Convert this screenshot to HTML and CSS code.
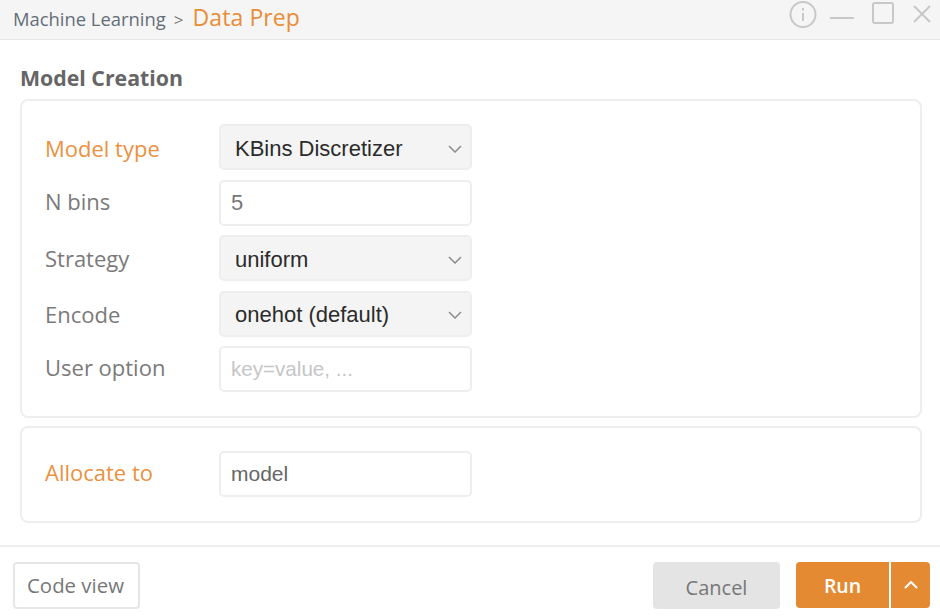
FILE: index.html
```html
<!DOCTYPE html>
<html lang="en">
<head>
    <meta charset="UTF-8">
    <title>Data Prep</title>
    <link rel="stylesheet" href="styles.css">
</head>
<body>
    <div class="window">
        <div class="titlebar">
            <div class="crumbs">
                <span class="crumb">Machine Learning</span>
                <span class="crumb-sep">&gt;</span>
                <span class="crumb-current">Data Prep</span>
            </div>
            <div class="win-icons">
                <svg width="28" height="28" viewBox="0 0 28 28" fill="none" stroke="#c8c8c8" stroke-width="2">
                    <circle cx="14" cy="13.5" r="12.5"/>
                    <path d="M14 12v8"/>
                    <path d="M14 7v2.5"/>
                </svg>
                <svg class="icon-min" width="24" height="28" viewBox="0 0 24 28" fill="none" stroke="#c8c8c8" stroke-width="2">
                    <path d="M0 17h24"/>
                </svg>
                <svg class="icon-max" width="22" height="24" viewBox="0 0 22 24" fill="none" stroke="#c8c8c8" stroke-width="2">
                    <rect x="1" y="2" width="20" height="20" rx="2"/>
                </svg>
                <svg class="icon-close" width="20" height="24" viewBox="0 0 20 24" fill="none" stroke="#c8c8c8" stroke-width="2">
                    <path d="M2 5l16 16M18 5L2 21"/>
                </svg>
            </div>
        </div>

        <div class="content">
            <h2 class="section-title">Model Creation</h2>
            <div class="card card-main">
                <div class="form-row">
                    <label class="form-label accent label-low">Model type</label>
                    <div class="field select">KBins Discretizer<svg class="chevron" width="14" height="8" viewBox="0 0 14 8"><path d="M1 1l6 6 6-6"/></svg></div>
                </div>
                <div class="form-row">
                    <label class="form-label label-high">N bins</label>
                    <div class="field input">5</div>
                </div>
                <div class="form-row">
                    <label class="form-label">Strategy</label>
                    <div class="field select">uniform<svg class="chevron" width="14" height="8" viewBox="0 0 14 8"><path d="M1 1l6 6 6-6"/></svg></div>
                </div>
                <div class="form-row">
                    <label class="form-label">Encode</label>
                    <div class="field select">onehot (default)<svg class="chevron" width="14" height="8" viewBox="0 0 14 8"><path d="M1 1l6 6 6-6"/></svg></div>
                </div>
                <div class="form-row">
                    <label class="form-label label-high">User option</label>
                    <div class="field input placeholder">key=value, ...</div>
                </div>
            </div>
            <div class="card card-alloc">
                <div class="form-row">
                    <label class="form-label accent label-high">Allocate to</label>
                    <div class="field input value">model</div>
                </div>
            </div>
        </div>

        <div class="footer">
            <button class="btn btn-code">Code view</button>
            <div class="footer-right">
                <button class="btn btn-cancel">Cancel</button>
                <div class="run-group">
                    <button class="btn btn-run">Run</button>
                    <button class="btn btn-caret">
                        <svg width="14" height="8" viewBox="0 0 14 8" fill="none" stroke="#fff" stroke-width="2"><path d="M1 7l6-6 6 6"/></svg>
                    </button>
                </div>
            </div>
        </div>
    </div>
</body>
</html>
```

FILE: styles.css
```css
* {
    box-sizing: border-box;
}

body {
    margin: 0;
    background-color: #fff;
    font-family: "Open Sans", "Noto Sans", sans-serif;
    color: #6e6e6e;
}

.window {
    width: 940px;
    height: 616px;
    display: flex;
    flex-direction: column;
    overflow: hidden;
}

.titlebar {
    height: 40px;
    padding: 0 8px 0 13px;
    display: flex;
    align-items: flex-start;
    justify-content: space-between;
    background-color: #f5f5f5;
    border-bottom: 1px solid #e6e6e6;
}

.crumbs {
    display: flex;
    align-items: baseline;
    gap: 8px;
    margin-top: 1px;
}

.crumb {
    font-size: 18.4px;
    color: #646e78;
}

.crumb-sep {
    font-size: 17px;
    color: #7a7a7a;
    margin-right: 1px;
}

.crumb-current {
    font-size: 23px;
    letter-spacing: 0.1px;
    color: #e88d38;
}

.win-icons {
    display: flex;
    align-items: flex-start;
    padding-top: 1px;
}

.icon-min {
    margin-left: 13px;
}

.icon-max {
    margin-left: 18px;
}

.icon-close {
    margin-left: 18px;
}

.content {
    flex: 1;
    padding: 0 18px 0 20px;
}

.section-title {
    margin: 24px 0 8px;
    font-size: 21.3px;
    line-height: 27px;
    font-weight: 700;
    color: #666;
}

.card {
    border: 2px solid #eee;
    border-radius: 8px;
    padding: 23px 23px 0;
}

.card-main {
    height: 319px;
    display: flex;
    flex-direction: column;
    gap: 9.5px;
}

.card-alloc {
    height: 97px;
    margin-top: 8px;
}

.form-row {
    display: flex;
    align-items: center;
}

.form-label {
    width: 174px;
    font-size: 22px;
    color: #7a7a7a;
}

.form-label.accent {
    color: #ea9142;
}

.label-high {
    margin-bottom: 4px;
}

.label-low {
    margin-top: 2px;
}

.field {
    width: 253px;
    height: 46px;
    display: flex;
    align-items: center;
    justify-content: space-between;
    border: 2px solid #eee;
    border-radius: 5px;
    font-family: "Liberation Sans", Arial, sans-serif;
    font-size: 22px;
}

.select {
    padding: 3px 8px 0 14px;
    background-color: #f4f4f4;
    color: #2b2b2b;
}

.input {
    padding: 0 10px;
    background-color: #fff;
    color: #777;
}

.input.value {
    font-size: 21px;
    color: #666;
}

.input.placeholder {
    font-size: 20.6px;
    color: #c6c6c6;
}

.chevron {
    fill: none;
    stroke: #8c8c8c;
    stroke-width: 1.5;
}

.footer {
    height: 71px;
    padding: 15px 10px 0 13px;
    display: flex;
    justify-content: space-between;
    border-top: 2px solid #eee;
}

.footer-right {
    display: flex;
    gap: 16px;
}

.btn {
    height: 47px;
    border: none;
    border-radius: 4px;
    font-family: "Open Sans", "Noto Sans", sans-serif;
    font-size: 20px;
    padding: 0;
}

.btn-code {
    width: 127px;
    padding: 0 2px 2px 0;
    background-color: #fff;
    border: 2px solid #e6e6e6;
    color: #777;
    font-size: 20.4px;
}

.btn-cancel {
    width: 127px;
    padding-top: 4px;
    background-color: #e4e4e4;
    color: #777;
}

.run-group {
    display: flex;
    gap: 2px;
}

.btn-run {
    width: 93px;
    height: 46px;
    background-color: #e48a33;
    color: #fff;
    font-size: 19.5px;
    font-weight: 600;
    border-radius: 4px 0 0 4px;
}

.btn-caret {
    width: 39px;
    height: 46px;
    display: flex;
    align-items: center;
    justify-content: center;
    background-color: #e48a33;
    border-radius: 0 4px 4px 0;
}
```
